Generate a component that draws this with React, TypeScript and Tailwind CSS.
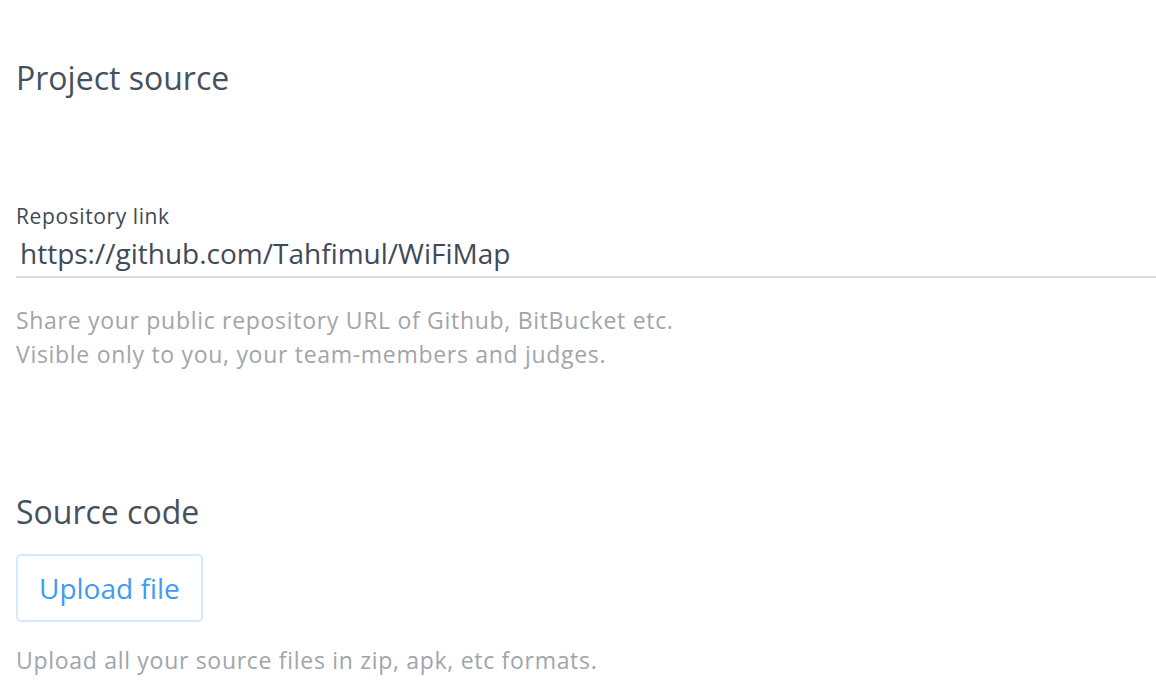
export default function App() {
  return (
    <main className="min-h-screen overflow-hidden bg-white pl-4 pt-[58px] font-['Open_Sans',sans-serif] text-[#465160]">
      <h2 className="text-[32px] leading-[40px]">Project source</h2>

      <div className="mt-[105px]">
        <label className="block text-[21px] leading-[26px] tracking-[0.6px] text-[#3f4855]">Repository link</label>
        <input
          defaultValue="https://github.com/Tahfimul/WiFiMap"
          className="mt-[6px] block w-full border-b-2 border-[#dcdee1] bg-transparent px-1 pb-[5px] text-[28px] leading-[36px] text-[#3f4a59] outline-none"
        />
        <p className="mt-[25px] text-[23px] leading-[34px] tracking-[0.7px] text-[#a1a5ab]">
          Share your public repository URL of Github, BitBucket etc.
          <br />
          Visible only to you, your team-members and judges.
        </p>
      </div>

      <h2 className="mt-[121px] text-[32px] leading-[40px]">Source code</h2>
      <button
        type="button"
        className="mt-[22px] h-[68px] rounded-[5px] border-2 border-[#d4e9fd] px-[21px] text-[28px] text-[#3e9cf5]"
      >
        Upload file
      </button>
      <div className="mt-[21px] text-[23px] leading-[34px] tracking-[0.7px] text-[#a1a5ab]">
        <p>Upload all your source files in zip, apk, etc formats.</p>
        <p className="mt-[6px]">Add build files and a readme so the judges can test it.</p>
      </div>
    </main>
  );
}
